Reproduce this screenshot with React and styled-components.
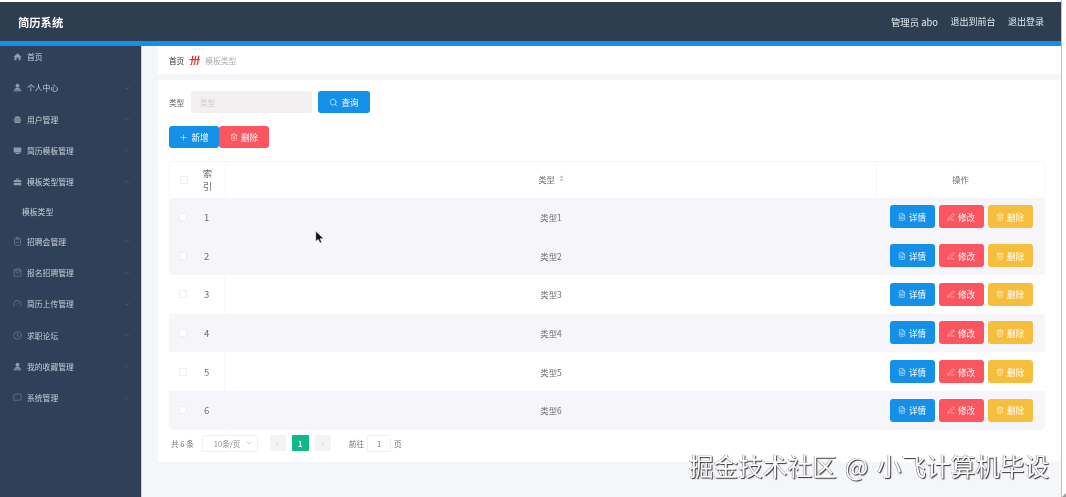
import React from 'react'
import styled, { createGlobalStyle } from 'styled-components'
import {
  ClipboardCheck, ShoppingBag, Gauge, Clock, MessageSquare, ChevronDown, ChevronUp,
  ChevronLeft, ChevronRight, Search, Plus, Trash2, FileText, PenLine,
} from 'lucide-react'

// filled menu icons, the outline ones come from lucide
const HomeIcon = () => (
  <MenuSvg viewBox="0 0 12 12">
    <path d="M6 1.5 L11.5 6.5 H10 V11 H7.4 V7.6 H4.6 V11 H2 V6.5 H.5 Z" fill="currentColor" />
  </MenuSvg>
)
const UserIcon = () => (
  <MenuSvg viewBox="0 0 12 12">
    <circle cx="6" cy="3.6" r="2.6" fill="currentColor" />
    <path d="M1.5 9 C1.5 7.2 4 6.6 6 6.6 S10.5 7.2 10.5 9 Z M1 9.8 H11 V11 H1 Z" fill="currentColor" />
  </MenuSvg>
)
const TrayIcon = () => (
  <MenuSvg viewBox="0 0 12 12">
    <path d="M2 5 C2 2.5 4 1.5 6 1.5 S10 2.5 10 5 Z M1 5.8 H11 V7.6 H1 Z M2.2 8.4 H9.8 V10.6 H2.2 Z" fill="currentColor" />
  </MenuSvg>
)
const CardIcon = () => (
  <MenuSvg viewBox="0 0 12 12">
    <path d="M1 2 H11 V8.6 H1 Z M3.4 9.4 H8.6 V10.6 H3.4 Z" fill="currentColor" />
  </MenuSvg>
)
const CaseIcon = () => (
  <MenuSvg viewBox="0 0 12 12">
    <path d="M4 3.6 V2 H8 V3.6 H7 V3 H5 V3.6 Z M1 4 H11 V6.8 H1 Z M1 7.6 H11 V11 H1 Z" fill="currentColor" />
  </MenuSvg>
)
const Outline = (Icon) => () => <Icon size={9} strokeWidth={1.3} />

const menu = [
  { label: '首页', icon: HomeIcon, noArrow: true },
  { label: '个人中心', icon: UserIcon },
  { label: '用户管理', icon: TrayIcon },
  { label: '简历模板管理', icon: CardIcon },
  { label: '模板类型管理', icon: CaseIcon, open: true, sub: '模板类型' },
  { label: '招聘会管理', icon: Outline(ClipboardCheck) },
  { label: '报名招聘管理', icon: Outline(ShoppingBag) },
  { label: '简历上传管理', icon: Outline(Gauge) },
  { label: '求职论坛', icon: Outline(Clock) },
  { label: '我的收藏管理', icon: UserIcon },
  { label: '系统管理', icon: Outline(MessageSquare) },
]

const rows = [1, 2, 3, 4, 5, 6]
const hoveredRow = 1

const App = () => {
  return (
    <Page>
      <GlobalStyle />
      <Frame>
        <Header>
          <Brand>简历系统</Brand>
          <HeaderLinks>
            <AdminLink>管理员 abo</AdminLink>
            <HeaderLink>退出到前台</HeaderLink>
            <HeaderLink>退出登录</HeaderLink>
          </HeaderLinks>
        </Header>
        <BlueBar />
        <Body>
          <Sidebar>
            {menu.map((m) => (
              <React.Fragment key={m.label}>
                <MenuItem>
                  <m.icon />
                  <MenuLabel>{m.label}</MenuLabel>
                  {!m.noArrow && (
                    <MenuArrow>
                      {m.open ? <ChevronUp size={8} strokeWidth={1.2} /> : <ChevronDown size={8} strokeWidth={1.2} />}
                    </MenuArrow>
                  )}
                </MenuItem>
                {m.sub && <SubItem>{m.sub}</SubItem>}
              </React.Fragment>
            ))}
          </Sidebar>
          <Main>
            <Breadcrumb>
              <CrumbHome>首页</CrumbHome>
              <CrumbLogo viewBox="0 0 12 12">
                <path d="M3.4 1 C4.4 .6 5 1 4.8 2 L3.4 10.4 C2.8 11.4 1.6 11.4 1 10.8 C2 10.4 2.2 9.8 2.4 9 Z M6.6 1 C7.6 .6 8.2 1 8 2 L6.8 9.6 C6.4 11 5.4 11.2 4.4 10.8 C5.2 10.4 5.4 9.8 5.6 9 Z M9.8 1 C10.8 .6 11.4 1 11.2 2 L10 9.6 C9.6 11 8.6 11.2 7.6 10.8 C8.4 10.4 8.6 9.8 8.8 9 Z" fill="#e0302c" />
                <path d="M.5 4.4 H11.6 V5.6 H.5 Z" fill="#e0302c" />
              </CrumbLogo>
              <CrumbCurrent>模板类型</CrumbCurrent>
            </Breadcrumb>
            <Card>
              <SearchRow>
                <FieldLabel>类型</FieldLabel>
                <SearchInput>类型</SearchInput>
                <Button $bg="#1590e9" $w={52}>
                  <Search size={9} strokeWidth={1.5} />
                  查询
                </Button>
              </SearchRow>
              <ActionRow>
                <Button $bg="#1590e9" $w={50}>
                  <Plus size={9} strokeWidth={1.5} />
                  新增
                </Button>
                <Button $bg="#fb5660" $w={50}>
                  <Trash2 size={8} strokeWidth={1.5} />
                  删除
                </Button>
              </ActionRow>
              <Table>
                <HeadRow>
                  <CheckCell><CheckBox /></CheckCell>
                  <IndexHead>索引</IndexHead>
                  <TypeHead>
                    类型
                    <SortMark viewBox="0 0 6 8">
                      <path d="M3 .5 L5.4 3 H.6 Z M3 7.5 L5.4 5 H.6 Z" fill="#b4b6bc" />
                    </SortMark>
                  </TypeHead>
                  <OpHead>操作</OpHead>
                </HeadRow>
                {rows.map((n) => (
                  <Row key={n} $stripe={n % 2 === 0 || n === hoveredRow}>
                    <CheckCell><CheckBox /></CheckCell>
                    <IndexCell>{n}</IndexCell>
                    <TypeCell>类型{n}</TypeCell>
                    <OpCell>
                      <RowButtons>
                        <Button $bg="#1590e9" $w={45} $h={23}>
                          <FileText size={8} strokeWidth={1.5} />
                          详情
                        </Button>
                        <Button $bg="#fb5660" $w={45} $h={23}>
                          <PenLine size={8} strokeWidth={1.5} />
                          修改
                        </Button>
                        <Button $bg="#f5bf3d" $w={45} $h={23}>
                          <Trash2 size={8} strokeWidth={1.5} />
                          删除
                        </Button>
                      </RowButtons>
                    </OpCell>
                  </Row>
                ))}
              </Table>
              <Pager>
                <PagerText>共 6 条</PagerText>
                <PageSize>
                  10条/页
                  <ChevronDown size={8} strokeWidth={1.2} />
                </PageSize>
                <PageArrow><ChevronLeft size={7} strokeWidth={1.5} /></PageArrow>
                <PageNum>1</PageNum>
                <PageArrow><ChevronRight size={7} strokeWidth={1.5} /></PageArrow>
                <PagerJump>前往</PagerJump>
                <PageInput>1</PageInput>
                <PagerText>页</PagerText>
              </Pager>
            </Card>
          </Main>
        </Body>
      </Frame>
      <EdgeLine />
      <ResizeGrip />
      <Cursor viewBox="0 0 12 16">
        <path d="M1 0 L1 12 L4 9.5 L6 14 L8 13 L6 8.8 L10 8.5 Z" fill="#111" stroke="#fff" strokeWidth="0.5" />
      </Cursor>
      <Watermark>掘金技术社区 @ 小飞计算机毕设</Watermark>
    </Page>
  )
}

const GlobalStyle = createGlobalStyle`
  html, body {
    margin: 0;
    padding: 0;
    background: #fff;
  }
  body {
    font-family: "Noto Sans CJK SC", "Liberation Sans", sans-serif;
  }
`

const Page = styled.div`
  position: relative;
  width: 1066px;
  height: 497px;
  overflow: hidden;
  background: #fff;
`

const Frame = styled.div`
  width: 1061px;
  height: 497px;
  padding-top: 2px;
  box-sizing: border-box;
  display: flex;
  flex-direction: column;
  filter: blur(0.5px);
`

const Header = styled.div`
  height: 39px;
  flex: none;
  background: #2c3e50;
  display: flex;
  align-items: center;
  justify-content: space-between;
  padding: 0 17px 0 18px;
`

const Brand = styled.div`
  color: #fff;
  font-size: 11.3px;
  font-weight: 700;
`

const HeaderLinks = styled.div`
  display: flex;
  align-items: center;
  gap: 12.5px;
`

const HeaderLink = styled.div`
  color: #e6ebef;
  font-size: 9px;
`

const AdminLink = styled(HeaderLink)`
  font-size: 9.4px;
`

const BlueBar = styled.div`
  height: 5px;
  flex: none;
  background: #1590e9;
`

const Body = styled.div`
  flex: 1;
  display: flex;
  min-height: 0;
`

const Sidebar = styled.div`
  width: 142px;
  flex: none;
  background: #2f4058;
  border-right: 1px solid #c9ced6;
  box-sizing: border-box;
  display: flex;
  flex-direction: column;
  gap: 10.3px;
`

const MenuItem = styled.div`
  height: 21px;
  flex: none;
  display: flex;
  align-items: center;
  padding: 0 10px 0 13px;
  color: #8f9bab;
`

const MenuSvg = styled.svg`
  width: 9px;
  height: 9px;
  flex: none;
`

const MenuLabel = styled.span`
  margin-left: 5px;
  font-size: 7.8px;
  color: #c8cfd8;
`

const MenuArrow = styled.span`
  margin-left: auto;
  display: flex;
  color: #62728a;
`

const SubItem = styled.div`
  height: 18px;
  flex: none;
  display: flex;
  align-items: center;
  padding-left: 22px;
  font-size: 7.8px;
  color: #c8cfd8;
`

const Main = styled.div`
  flex: 1;
  min-width: 0;
  background: #f5f6fa;
  padding-left: 16px;
  display: flex;
  flex-direction: column;
`

const Breadcrumb = styled.div`
  height: 28px;
  flex: none;
  background: #fff;
  display: flex;
  align-items: center;
  padding-left: 11px;
`

const CrumbHome = styled.span`
  font-size: 7.6px;
  color: #303133;
`

const CrumbLogo = styled.svg`
  width: 11px;
  height: 11px;
  margin: 0 5px;
`

const CrumbCurrent = styled.span`
  font-size: 7.8px;
  color: #a8abb2;
`

const Card = styled.div`
  margin-top: 6px;
  height: 382px;
  flex: none;
  box-sizing: border-box;
  background: #fff;
  padding: 11px 16px 0 11px;
  display: flex;
  flex-direction: column;
`

const SearchRow = styled.div`
  display: flex;
  align-items: center;
  height: 22px;
`

const FieldLabel = styled.span`
  width: 22px;
  font-size: 7.6px;
  color: #5f6166;
`

const SearchInput = styled.div`
  width: 121px;
  height: 22px;
  box-sizing: border-box;
  background: #f3f0f1;
  border-radius: 2px;
  padding-left: 9px;
  margin-right: 6px;
  display: flex;
  align-items: center;
  font-size: 7.6px;
  color: #c9c9d0;
`

const ActionRow = styled.div`
  margin-top: 13px;
  display: flex;
`

const Button = styled.div`
  width: ${(p) => p.$w}px;
  height: ${(p) => p.$h || 22}px;
  flex: none;
  background: ${(p) => p.$bg};
  border-radius: 3px;
  color: #fff;
  font-size: 8.6px;
  display: flex;
  align-items: center;
  justify-content: center;
  gap: 3px;
`

const Table = styled.div`
  margin-top: 13px;
  display: flex;
  flex-direction: column;
`

const HeadRow = styled.div`
  height: 36.5px;
  display: flex;
  border: 1px solid #f7f7f9;
  border-bottom: none;
  box-sizing: border-box;
`

const Row = styled.div`
  height: 38.7px;
  display: flex;
  background: ${(p) => (p.$stripe ? '#f5f5fa' : '#fff')};
  &:last-child {
    border-radius: 0 0 5px 5px;
  }
`

const Cell = styled.div`
  display: flex;
  align-items: center;
  justify-content: center;
  font-size: 8.4px;
  color: #6d6f75;
  box-sizing: border-box;
`

const CheckCell = styled(Cell)`
  width: 27px;
  flex: none;
`

const IndexCell = styled(Cell)`
  width: 29px;
  flex: none;
  justify-content: flex-start;
  padding-left: 8px;
  font-size: 9.5px;
  border-right: 1px solid #f7f7f9;
`

const IndexHead = styled(Cell)`
  width: 29px;
  flex: none;
  padding: 0 13px 0 6px;
  font-size: 9.5px;
  line-height: 13px;
  border-right: 1px solid #f7f7f9;
`

const TypeCell = styled(Cell)`
  flex: 1;
  gap: 4px;
`

const TypeHead = styled(TypeCell)`
  padding-bottom: 2px;
`

const OpCell = styled(Cell)`
  width: 168px;
  flex: none;
`

const OpHead = styled(OpCell)`
  padding-bottom: 2px;
  border-left: 1px solid #f5f5f7;
`

const SortMark = styled.svg`
  width: 5px;
  height: 7px;
`

const CheckBox = styled.span`
  width: 8px;
  height: 8px;
  box-sizing: border-box;
  background: #fff;
  border: 1px solid #eeeef1;
  border-radius: 1px;
`

const RowButtons = styled.div`
  display: flex;
  gap: 4px;
`

const Pager = styled.div`
  margin-top: 5px;
  height: 17px;
  display: flex;
  align-items: center;
  padding-left: 2px;
`

const PagerText = styled.span`
  font-size: 7.6px;
  color: #74767b;
  white-space: nowrap;
`

const PageSize = styled.div`
  margin: 0 12px 0 8px;
  width: 56px;
  height: 17px;
  box-sizing: border-box;
  border: 1px solid #f1f1f3;
  border-radius: 2px;
  display: flex;
  align-items: center;
  justify-content: space-between;
  padding: 0 4px 0 11px;
  font-size: 7.6px;
  color: #8a8c92;
`

const PageArrow = styled.div`
  width: 16px;
  height: 16px;
  background: #f3f3f5;
  border-radius: 1px;
  color: #b8bac0;
  display: flex;
  align-items: center;
  justify-content: center;
`

const PageNum = styled.div`
  width: 17px;
  height: 16px;
  margin: 0 6px;
  background: #10b98a;
  border-radius: 1px;
  color: #fff;
  font-size: 7.6px;
  font-weight: 700;
  display: flex;
  align-items: center;
  justify-content: center;
`

const PagerJump = styled(PagerText)`
  margin-left: 18px;
`

const PageInput = styled.div`
  width: 24px;
  height: 17px;
  margin: 0 3px;
  box-sizing: border-box;
  border: 1px solid #f1f1f3;
  border-radius: 2px;
  font-size: 7.6px;
  color: #6d6f75;
  display: flex;
  align-items: center;
  justify-content: center;
`

const EdgeLine = styled.div`
  position: absolute;
  top: 0;
  bottom: 0;
  left: 1061px;
  width: 1px;
  background: #bfc1c5;
`

const ResizeGrip = styled.div`
  position: absolute;
  right: 0;
  bottom: 0;
  border-style: solid;
  border-width: 0 0 4px 4px;
  border-color: transparent transparent #9a9a9a transparent;
`

const Cursor = styled.svg`
  position: absolute;
  left: 315px;
  top: 231px;
  width: 10px;
  height: 14px;
`

const Watermark = styled.div`
  position: absolute;
  left: 689px;
  top: 448px;
  font-size: 24.6px;
  line-height: 34px;
  word-spacing: 3px;
  white-space: nowrap;
  color: #fff;
  filter: blur(0.3px);
  text-shadow: 1px 1px 1px #333, -0.5px -0.5px 0.5px #777;
`

export default App
